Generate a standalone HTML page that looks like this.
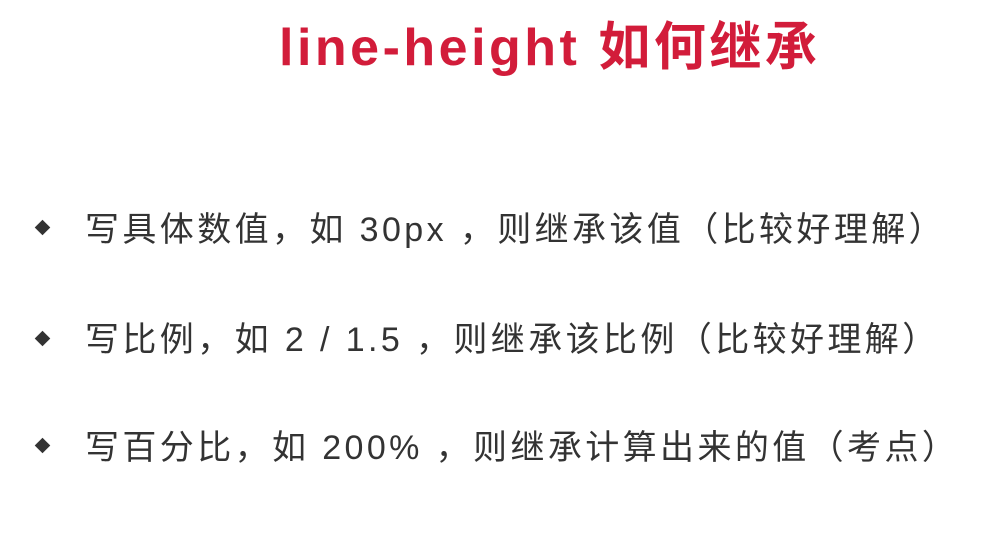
<!DOCTYPE html>
<html><head><meta charset="utf-8"><style>
body{margin:0;width:998px;height:535px;background:#fff;overflow:hidden;position:relative;font-family:"Liberation Sans","Noto Sans CJK SC",sans-serif;}
.t{position:absolute;left:279px;top:13px;font-size:52px;font-weight:bold;color:#d21c3a;white-space:nowrap;line-height:70px;letter-spacing:3.5px;}
.l{position:absolute;left:85px;font-size:34px;color:#333;white-space:nowrap;line-height:44px;letter-spacing:3.4px;}
.d{position:absolute;left:37px;width:11px;height:11px;background:#333;transform:rotate(45deg);}
</style></head><body>
<div class="t">line-height 如何继承</div>
<div class="d" style="top:222px"></div>
<div class="l" style="top:208px">写具体数值，如 30px ，则继承该值（比较好理解）</div>
<div class="d" style="top:333px"></div>
<div class="l" style="top:318px">写比例，如 2 / 1.5 ，则继承该比例（比较好理解）</div>
<div class="d" style="top:440px"></div>
<div class="l" style="top:426px">写百分比，如 200% ，则继承计算出来的值（考点）</div>
</body></html>
